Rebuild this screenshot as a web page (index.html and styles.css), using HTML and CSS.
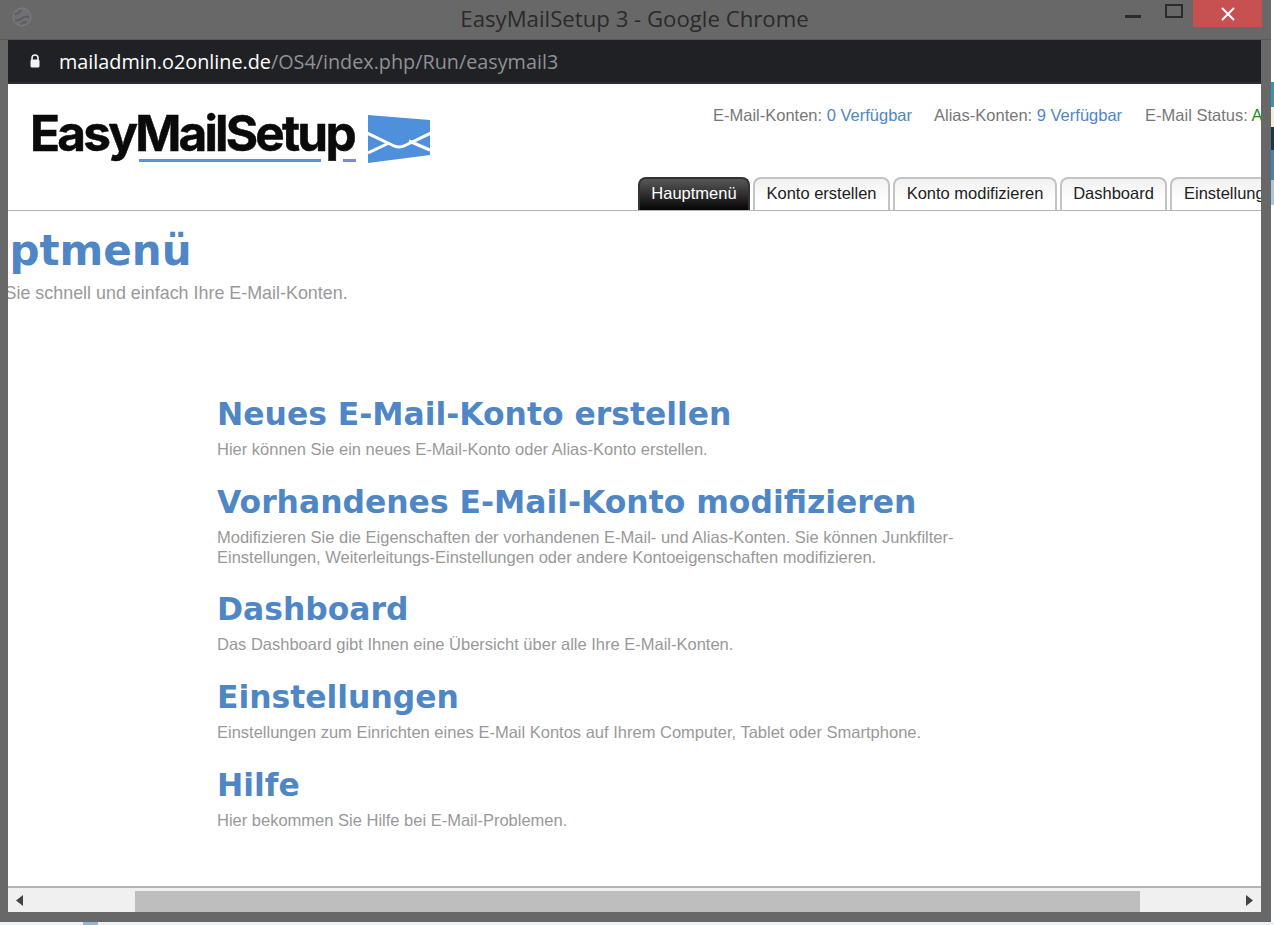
FILE: index.html
```html
<!DOCTYPE html>
<html lang="de">
<head>
<meta charset="utf-8">
<title>EasyMailSetup 3 - Google Chrome</title>
<link rel="stylesheet" href="styles.css">
</head>
<body>
<div class="desktop">
  <div class="window">
    <div class="titlebar">
      <svg class="favicon" width="20" height="20" viewBox="0 0 20 20"><circle cx="10" cy="10" r="9.500" fill="#6f6f74"/><path d="M2 7c3 1 5-1 7-4M3 14c3-2 4 0 6-2s3-3 8-2M9 18c0-3 3-3 6-3" fill="none" stroke="#5d5d60" stroke-width="1.800"/><circle cx="10" cy="10" r="9" fill="none" stroke="#7b7b80" stroke-width="1"/></svg>
      <div class="wintitle">EasyMailSetup 3 - Google Chrome</div>
      <div class="winctl">
        <svg class="ctl-min" width="16" height="3" viewBox="0 0 16 3"><rect width="16" height="3" fill="#2b2b2b"/></svg>
        <svg class="ctl-max" width="18" height="14" viewBox="0 0 18 14"><rect x="1" y="1" width="16" height="12" fill="none" stroke="#2b2b2b" stroke-width="2"/></svg>
        <div class="ctl-close"><svg width="14" height="14" viewBox="0 0 14 14"><path d="M1 1l12 12M13 1L1 13" stroke="#fff" stroke-width="2"/></svg></div>
      </div>
    </div>
    <div class="addressbar">
      <svg class="lock" width="12" height="16" viewBox="0 0 12 16"><path d="M3 7V5a3 3 0 0 1 6 0v2" fill="none" stroke="#f2f2f2" stroke-width="1.600"/><rect x="1.500" y="6.500" width="9" height="8" rx="1.500" fill="#f2f2f2"/></svg>
      <span class="url"><span class="url-host">mailadmin.o2online.de</span>/OS4/index.php/Run/easymail3</span>
    </div>
    <div class="viewport">
      <header class="pagehead">
        <div class="headtop">
          <div class="logo">
            <div class="logotext">EasyMailSetup</div>
            <svg class="logomark" width="62" height="48" viewBox="0 0 62 48"><path d="M0 0l62 5v35L0 48z" fill="#4f90dc"/><path d="M-1 18l25 12q7 4 14 0l25-12M0 38l21-10M62 35l-21-9" fill="none" stroke="#fff" stroke-width="3"/></svg>
          </div>
          <div class="stats">
            <span class="stat">E-Mail-Konten: <span class="blue">0 Verfügbar</span></span>
            <span class="stat">Alias-Konten: <span class="blue">9 Verfügbar</span></span>
            <span class="stat">E-Mail Status: <span class="green">Aktiv</span></span>
          </div>
        </div>
        <nav class="tabs">
          <a class="tab active">Hauptmenü</a>
          <a class="tab t2">Konto erstellen</a>
          <a class="tab t3">Konto modifizieren</a>
          <a class="tab t4">Dashboard</a>
          <a class="tab t5">Einstellungen</a>
        </nav>
      </header>
      <div class="pageintro">
        <h1>Hauptmenü</h1>
        <p>Verwalten Sie schnell und einfach Ihre E-Mail-Konten.</p>
      </div>
      <main class="menu">
        <section class="item">
          <h2>Neues E-Mail-Konto erstellen</h2>
          <p>Hier können Sie ein neues E-Mail-Konto oder Alias-Konto erstellen.</p>
        </section>
        <section class="item two">
          <h2>Vorhandenes E-Mail-Konto modifizieren</h2>
          <p>Modifizieren Sie die Eigenschaften der vorhandenen E-Mail- und Alias-Konten. Sie können Junkfilter-<br>Einstellungen, Weiterleitungs-Einstellungen oder andere Kontoeigenschaften modifizieren.</p>
        </section>
        <section class="item">
          <h2>Dashboard</h2>
          <p>Das Dashboard gibt Ihnen eine Übersicht über alle Ihre E-Mail-Konten.</p>
        </section>
        <section class="item">
          <h2>Einstellungen</h2>
          <p>Einstellungen zum Einrichten eines E-Mail Kontos auf Ihrem Computer, Tablet oder Smartphone.</p>
        </section>
        <section class="item">
          <h2>Hilfe</h2>
          <p>Hier bekommen Sie Hilfe bei E-Mail-Problemen.</p>
        </section>
      </main>
    </div>
    <div class="hscroll">
      <svg class="arrow" width="7" height="11" viewBox="0 0 7 11"><path d="M7 0v11L0 5.500z" fill="#444"/></svg>
      <div class="track"><div class="thumb"></div></div>
      <svg class="arrow" width="7" height="11" viewBox="0 0 7 11"><path d="M0 0v11l7-5.500z" fill="#444"/></svg>
    </div>
  </div>
  <div class="strip">
    <div class="s1"></div><div class="s2"></div><div class="s3"></div><div class="s4"></div><div class="s5"></div><div class="s6"></div><div class="s7"></div>
  </div>
</div>
<div class="deskbottom"><div class="deskmark"></div></div>
</body>
</html>
```
FILE: styles.css
```css
* { box-sizing: border-box; }
html, body { margin: 0; padding: 0; }
body {
  width: 1274px;
  height: 925px;
  overflow: hidden;
  background: #fff;
  font-family: "Liberation Sans", Arial, sans-serif;
}
.desktop { display: flex; height: 922px; }
.window {
  width: 1271px;
  flex: none;
  background: #686868;
  padding: 0 10px 10px 8px;
  display: flex;
  flex-direction: column;
}
.titlebar {
  height: 40px;
  flex: none;
  display: flex;
  align-items: flex-start;
  border-bottom: 1px solid #5a5a5a;
  margin-left: -8px;
  margin-right: -10px;
}
.favicon { margin: 7px 0 0 12px; flex: none; }
.wintitle {
  flex: none;
  width: 1269px;
  margin-left: -32px;
  text-align: center;
  font: 22.200px "Open Sans", sans-serif;
  color: #2a2a2a;
  line-height: 38px;
}
.winctl { display: flex; margin-left: -144px; align-items: flex-start; }
.ctl-min { margin: 15px 0 0 0; }
.ctl-max { margin: 4px 0 0 24px; }
.ctl-close {
  width: 69px;
  height: 27px;
  background: #c75050;
  margin-left: 10px;
  display: flex;
  align-items: center;
  justify-content: center;
}
.addressbar {
  height: 44px;
  flex: none;
  background: #202124;
  border-bottom: 2px solid #2c2d30;
  display: flex;
  align-items: center;
  color: #8f9296;
  font: 19.800px "Open Sans", sans-serif;
  padding-left: 21px;
}
.lock { margin-right: 18px; flex: none; }
.url-host { color: #fff; }
.viewport {
  flex: 1;
  min-height: 0;
  background: #fff;
  overflow: hidden;
  border-bottom: 2px solid #b4b4b4;
}
.pagehead { height: 127px; border-bottom: 1px solid #b5b5b5; display: flex; flex-direction: column; }
.headtop { display: flex; height: 93px; flex: none; }
.logo { width: 428px; flex: none; padding: 20px 0 0 22px; display: flex; align-items: flex-start; }
.logotext {
  width: 338px;
  font: 700 49.500px/58px "Inter", "Open Sans", sans-serif;
  letter-spacing: -2.800px;
  color: #0a0a0a;
  -webkit-text-stroke: 0.500px #0a0a0a;
  white-space: nowrap;
  background: linear-gradient(#5b93d8, #5b93d8) 109px 55px / 182px 3px no-repeat,
              linear-gradient(#7f86dc, #7f86dc) 313px 55px / 13px 3px no-repeat;
  height: 60px;
}
.logomark { flex: none; margin: 11px 0 0 0; overflow: hidden; }
.stats { display: flex; flex: none; gap: 22px; padding: 22px 0 0 277px; font-size: 16.500px; color: #777; white-space: nowrap; width: 825px; overflow: hidden; }
.stat:last-child { margin-left: 1px; }
.blue { color: #4f86c6; }
.green { color: #1a8f1a; }
.tabs { display: flex; gap: 3px; padding-left: 630px; align-items: flex-end; height: 33px; overflow: hidden; }
.tab {
  height: 33px;
  flex: none;
  padding-top: 5px;
  text-align: center;
  font-size: 16.500px;
  line-height: 19px;
  color: #222;
  background: linear-gradient(#f1f1f1, #fff 70%);
  border: 2px solid #c3c3c3;
  border-bottom: 0;
  border-radius: 8px 8px 0 0;
}
.tab.active { width: 112px; color: #fff; background: linear-gradient(#585858, #050505); border-color: #333; }
.t2 { width: 137px; }
.t3 { width: 164px; }
.t4 { width: 107px; }
.t5 { width: 122px; text-align: left; padding-left: 12px; white-space: nowrap; overflow: hidden; }
.pageintro { height: 183px; margin-left: -87px; width: 600px; padding-top: 16px; }
.pageintro h1 { margin: 0 0 0 -5px; font: 700 42px/48px "DejaVu Sans", sans-serif; color: #4f86c6; }
.pageintro p { margin: 8px 0 0 0; font-size: 17.900px; line-height: 20px; color: #999; }
.menu { padding-left: 209px; }
.item { margin-bottom: 23.500px; }
.item.two { margin-bottom: 22.500px; }
.item h2 { margin: 0; font: 700 31.400px/40px "DejaVu Sans", sans-serif; color: #4f86c6; }
.item p { margin: 4.500px 0 0 0; font-size: 16.500px; line-height: 20px; color: #999; }
.hscroll {
  height: 24px;
  flex: none;
  background: #f0f0f0;
  display: flex;
  align-items: center;
  padding: 0 8px;
}
.track { flex: 1; height: 21px; margin: 3px 0 0 0; align-self: flex-start; padding-left: 112px; }
.thumb { width: 1005px; height: 21px; background: #bebebe; }
.strip { flex: 1; display: flex; flex-direction: column; background: #fff; }
.s1 { height: 82px; background: #fff; }
.s2 { height: 25px; background: #2b9ab8; }
.s3 { height: 20px; background: #f3ecd8; }
.s4 { height: 23px; background: #123a55; }
.s5 { height: 30px; background: #3d86b8; }
.s6 { height: 25px; background: #a9c8e0; }
.s7 { flex: 1; background: #fff; }
.deskbottom { height: 3px; background: #eef2f4; padding-left: 83px; }
.deskmark { width: 15px; height: 3px; background: #8fb9d2; }
```
